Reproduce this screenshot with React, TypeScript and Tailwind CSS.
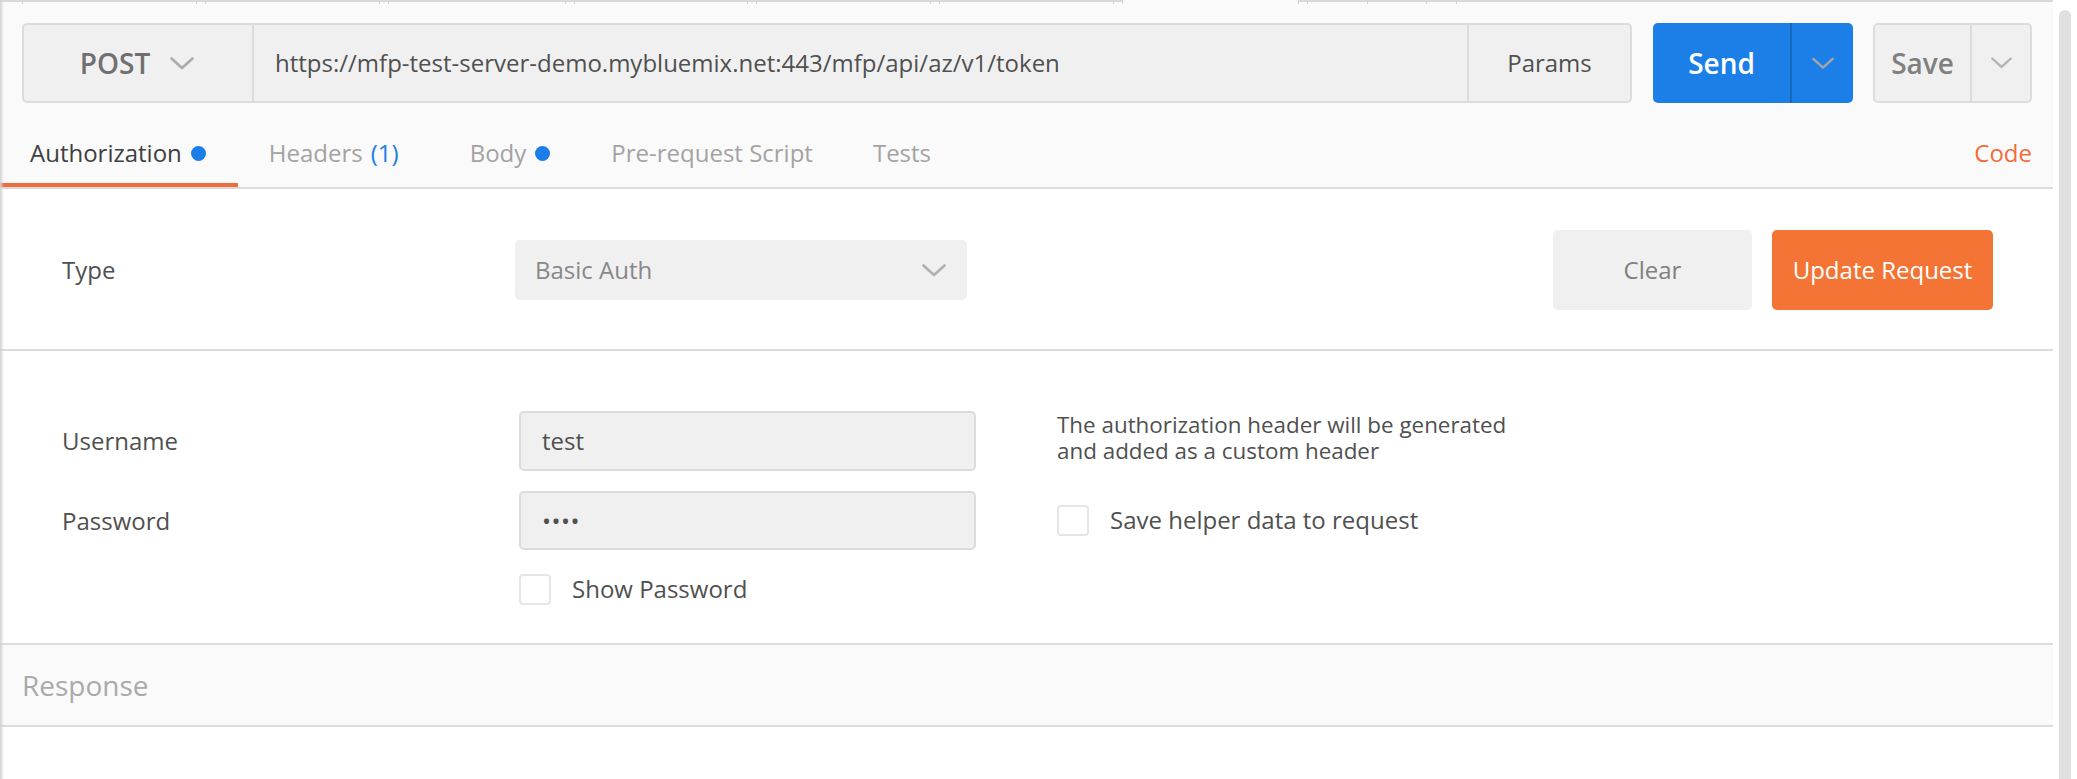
const ticks = [22, 196, 205, 379, 388, 565, 574, 747, 756, 930, 939, 1113, 1122, 1298, 1307, 1367, 1426, 1456]
const edges = [0, ...ticks, 2053]

function Chevron({ className, color }: { className: string; color: string }) {
  return (
    <svg viewBox="0 0 24 13" className={className} fill="none">
      <path d="M1.5 1.5 L12 11 L22.5 1.5" stroke={color} strokeWidth="2.6" strokeLinecap="round" strokeLinejoin="round" />
    </svg>
  )
}

function TabStrip() {
  // bottoms of the window tabs, cut off at the top edge
  return (
    <div className="flex h-[4px]">
      {edges.slice(0, -1).map((x, i) => {
        const w = edges[i + 1] - x
        const active = x === 1122
        return (
          <div
            key={x}
            style={{ width: w }}
            className={
              (active ? '' : 'border-t-2 border-[#d9d9d9] ') + (ticks.includes(x) ? 'border-l border-l-[#d2d2d2]' : '')
            }
          />
        )
      })}
    </div>
  )
}

function Checkbox() {
  return <span className="block h-[31px] w-[32px] rounded-[4px] border-2 border-[#e6e6e6] bg-white" />
}

export default function App() {
  return (
    <div className="relative h-[779px] w-[2077px] overflow-hidden bg-white font-['Open_Sans',sans-serif] text-[#505050]">
      {/* left window shadow */}
      <div className="absolute left-0 top-0 bottom-0 w-[4px] bg-gradient-to-r from-[#d2d2d2] to-transparent" />
      {/* scrollbar */}
      <div className="absolute top-[10px] bottom-0 left-[2059px] w-[12px] rounded-t-full bg-[#e0e0e0]" />

      <div className="w-[2053px]">
        <div className="bg-[#fafafa]">
          <TabStrip />

          {/* request line */}
          <div className="flex pl-[22px] pt-[19px]">
            <div className="flex h-[80px] w-[1610px] rounded-[5px] border-2 border-[#dcdcdc] bg-[#f0f0f0]">
              <div className="flex w-[230px] items-center justify-center gap-[20px] border-r-2 border-[#dcdcdc] pr-[2px]">
                <span className="text-[28px] font-semibold text-[#707070]">POST</span>
                <Chevron className="h-[13px] w-[24px]" color="#ababab" />
              </div>
              <div className="flex flex-1 items-center pl-[21px] text-[24px] text-[#505050]">
                https://mfp-test-server-demo.mybluemix.net:443/mfp/api/az/v1/token
              </div>
              <div className="flex w-[163px] items-center justify-center border-l-2 border-[#dcdcdc] text-[24px] text-[#505050]">
                Params
              </div>
            </div>

            <div className="ml-[21px] flex h-[80px] w-[200px] rounded-[5px] bg-[#1c7fe8]">
              <div className="flex w-[139px] items-center justify-center border-r-2 border-[#1767bd] text-[28px] font-semibold text-white">
                Send
              </div>
              <div className="flex flex-1 items-center justify-center">
                <Chevron className="h-[13px] w-[22px]" color="#a6a6a6" />
              </div>
            </div>

            <div className="ml-[20px] flex h-[80px] w-[159px] rounded-[5px] border-2 border-[#dcdcdc] bg-[#f0f0f0]">
              <div className="flex w-[97px] items-center justify-center border-r-2 border-[#dcdcdc] text-[28px] font-semibold text-[#808080]">
                Save
              </div>
              <div className="flex flex-1 items-center justify-center">
                <Chevron className="h-[12px] w-[21px]" color="#b4b4b4" />
              </div>
            </div>
          </div>

          {/* tabs */}
          <div className="mt-[1px] flex h-[85px] items-end border-b-2 border-[#dcdcdc] pr-[21px] text-[24px]">
            <div className="flex h-full items-center gap-[9px] border-b-4 border-[#f26b3a] pl-[30px] pr-[32px] pt-[19px] text-[#404040]">
              Authorization
              <span className="h-[15px] w-[15px] rounded-full bg-[#1b7ee8]" />
            </div>
            <div className="flex h-full items-center pb-[4px] pl-[31px] pr-[40px] pt-[19px] text-[#a3a3a3]">
              Headers <span className="ml-[8px] text-[#1b7ee8]">(1)</span>
            </div>
            <div className="flex h-full items-center gap-[9px] pb-[4px] pl-[31px] pr-[30px] pt-[19px] text-[#a3a3a3]">
              Body
              <span className="h-[15px] w-[15px] rounded-full bg-[#1b7ee8]" />
            </div>
            <div className="flex h-full items-center pb-[4px] pl-[31px] pr-[30px] pt-[19px] text-[#a3a3a3]">
              Pre-request Script
            </div>
            <div className="flex h-full items-center pb-[4px] pl-[30px] pr-[30px] pt-[19px] text-[#a3a3a3]">Tests</div>
            <div className="ml-auto flex h-full items-center pb-[4px] pt-[19px] text-[#f26b3a]">Code</div>
          </div>
        </div>

        {/* auth type */}
        <div className="flex h-[162px] items-center border-b-2 border-[#dcdcdc] pl-[62px] pr-[60px] pt-[2px]">
          <div className="w-[453px] text-[24px] text-[#505050]">Type</div>
          <div className="flex h-[60px] w-[452px] items-center justify-between rounded-[5px] bg-[#f0f0f0] pl-[20px] pr-[21px] text-[24px] text-[#888888]">
            Basic Auth
            <Chevron className="h-[13px] w-[24px]" color="#b0b0b0" />
          </div>
          <div className="ml-auto flex gap-[20px]">
            <div className="flex h-[80px] w-[199px] items-center justify-center rounded-[5px] bg-[#f0f0f0] text-[24px] text-[#808080]">
              Clear
            </div>
            <div className="flex h-[80px] w-[221px] items-center justify-center rounded-[5px] bg-[#f37435] text-[24px] text-white">
              Update Request
            </div>
          </div>
        </div>

        {/* basic auth form */}
        <div className="flex h-[292px] pl-[62px] pt-[60px]">
          <div className="flex w-[914px]">
            <div className="flex w-[457px] flex-col text-[24px] text-[#505050]">
              <div className="flex h-[60px] items-center">Username</div>
              <div className="mt-[20px] flex h-[59px] items-center">Password</div>
            </div>
            <div className="flex w-[457px] flex-col">
              <div className="flex h-[60px] items-center rounded-[5px] border-2 border-[#dcdcdc] bg-[#f0f0f0] pl-[21px] text-[24px] text-[#505050]">
                test
              </div>
              <div className="mt-[20px] flex h-[59px] items-center rounded-[5px] border-2 border-[#dcdcdc] bg-[#f0f0f0] pl-[21px] text-[24px] tracking-[0.5px] text-[#505050]">
                ••••
              </div>
              <div className="mt-[21px] flex items-center gap-[21px]">
                <Checkbox />
                <span className="text-[24px] text-[#505050]">Show Password</span>
              </div>
            </div>
          </div>
          <div className="ml-[81px] flex flex-col pt-[1px]">
            <div className="flex flex-col text-[22.4px] text-[#505050]">
              <span className="h-[26px] leading-[26px]">The authorization header will be generated</span>
              <span className="h-[26px] leading-[26px]">and added as a custom header</span>
            </div>
            <div className="mt-[38px] flex items-center gap-[21px]">
              <Checkbox />
              <span className="text-[24px] text-[#505050]">Save helper data to request</span>
            </div>
          </div>
        </div>

        {/* response */}
        <div className="flex h-[84px] items-center border-y-2 border-[#dcdcdc] bg-[#fafafa] pl-[22px] text-[28px] text-[#aaaaaa]">
          Response
        </div>
      </div>
    </div>
  )
}
